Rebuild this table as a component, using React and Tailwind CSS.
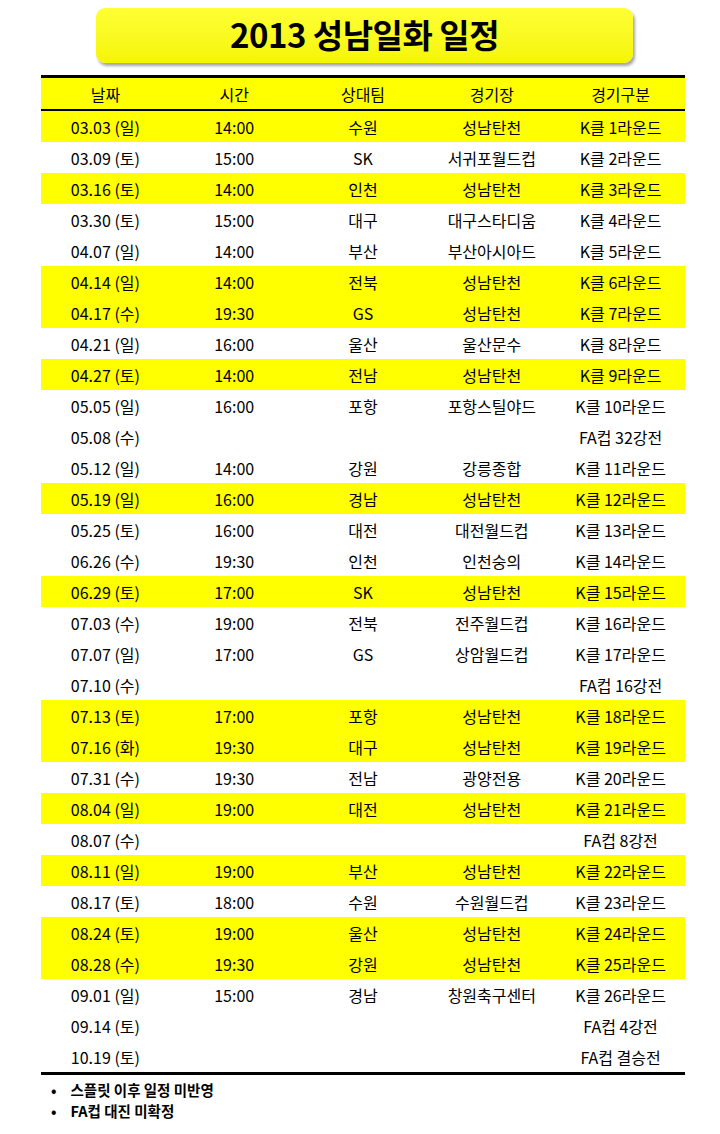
import React from "react";

const rows = [
  ["03.03 (일)", "14:00", "수원", "성남탄천", "K클 1라운드", true],
  ["03.09 (토)", "15:00", "SK", "서귀포월드컵", "K클 2라운드", false],
  ["03.16 (토)", "14:00", "인천", "성남탄천", "K클 3라운드", true],
  ["03.30 (토)", "15:00", "대구", "대구스타디움", "K클 4라운드", false],
  ["04.07 (일)", "14:00", "부산", "부산아시아드", "K클 5라운드", false],
  ["04.14 (일)", "14:00", "전북", "성남탄천", "K클 6라운드", true],
  ["04.17 (수)", "19:30", "GS", "성남탄천", "K클 7라운드", true],
  ["04.21 (일)", "16:00", "울산", "울산문수", "K클 8라운드", false],
  ["04.27 (토)", "14:00", "전남", "성남탄천", "K클 9라운드", true],
  ["05.05 (일)", "16:00", "포항", "포항스틸야드", "K클 10라운드", false],
  ["05.08 (수)", "", "", "", "FA컵 32강전", false],
  ["05.12 (일)", "14:00", "강원", "강릉종합", "K클 11라운드", false],
  ["05.19 (일)", "16:00", "경남", "성남탄천", "K클 12라운드", true],
  ["05.25 (토)", "16:00", "대전", "대전월드컵", "K클 13라운드", false],
  ["06.26 (수)", "19:30", "인천", "인천숭의", "K클 14라운드", false],
  ["06.29 (토)", "17:00", "SK", "성남탄천", "K클 15라운드", true],
  ["07.03 (수)", "19:00", "전북", "전주월드컵", "K클 16라운드", false],
  ["07.07 (일)", "17:00", "GS", "상암월드컵", "K클 17라운드", false],
  ["07.10 (수)", "", "", "", "FA컵 16강전", false],
  ["07.13 (토)", "17:00", "포항", "성남탄천", "K클 18라운드", true],
  ["07.16 (화)", "19:30", "대구", "성남탄천", "K클 19라운드", true],
  ["07.31 (수)", "19:30", "전남", "광양전용", "K클 20라운드", false],
  ["08.04 (일)", "19:00", "대전", "성남탄천", "K클 21라운드", true],
  ["08.07 (수)", "", "", "", "FA컵 8강전", false],
  ["08.11 (일)", "19:00", "부산", "성남탄천", "K클 22라운드", true],
  ["08.17 (토)", "18:00", "수원", "수원월드컵", "K클 23라운드", false],
  ["08.24 (토)", "19:00", "울산", "성남탄천", "K클 24라운드", true],
  ["08.28 (수)", "19:30", "강원", "성남탄천", "K클 25라운드", true],
  ["09.01 (일)", "15:00", "경남", "창원축구센터", "K클 26라운드", false],
  ["09.14 (토)", "", "", "", "FA컵 4강전", false],
  ["10.19 (토)", "", "", "", "FA컵 결승전", false],
];

const headers = ["날짜", "시간", "상대팀", "경기장", "경기구분"];

const font = { fontFamily: '"Noto Sans CJK KR", "Liberation Sans", sans-serif' };

export default function App() {
  return (
    <div className="w-[720px] h-[1134px] bg-white text-black overflow-hidden" style={font}>
      <div className="pt-2 pl-[96px] pr-[87px]">
        <div className="h-[55px] rounded-[9px] bg-gradient-to-b from-[#ffff33] to-[#f5f500] shadow-[2px_3px_3px_rgba(0,0,0,0.35)] flex items-center justify-center">
          <h1 className="text-[33px] font-bold leading-none tracking-[-0.5px] -mt-[2px]">2013 성남일화 일정</h1>
        </div>
      </div>

      <div className="mx-[41px] w-[644px] mt-[12px] border-t-[3px] border-b-[3px] border-black">
        <div className="grid grid-cols-5 h-[33px] bg-[#ffff00] border-b-[2px] border-black items-center text-[16px]">
          {headers.map((h) => (
            <div key={h} className="text-center">{h}</div>
          ))}
        </div>
        {rows.map((r) => (
          <div
            key={r[0]}
            className={`grid grid-cols-5 h-[31px] items-center text-[16px] ${r[5] ? "bg-[#ffff00]" : "bg-white"}`}
          >
            {r.slice(0, 5).map((c, i) => (
              <div key={i} className="text-center whitespace-nowrap">{c}</div>
            ))}
          </div>
        ))}
      </div>

      <ul className="ml-[51px] mt-[4px] text-[14.5px] font-bold leading-[21px]">
        <li className="flex gap-[14px] h-[21px]"><span>•</span><span>스플릿 이후 일정 미반영</span></li>
        <li className="flex gap-[14px] h-[21px]"><span>•</span><span>FA컵 대진 미확정</span></li>
      </ul>
    </div>
  );
}
